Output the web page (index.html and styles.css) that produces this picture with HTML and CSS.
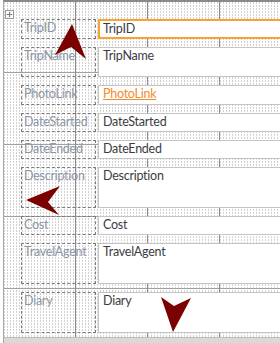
FILE: index.html
```
<!DOCTYPE html>
<html>
<head>
<meta charset="utf-8">
<link rel="stylesheet" href="styles.css">
</head>
<body>
<div class="canvas">
  <div class="selector">
    <svg width="9" height="9" viewBox="0 0 9 9"><rect x="0.5" y="0.5" width="8" height="8" fill="#fff" stroke="#9a9a9a"/><path d="M4.5 2v5M2 4.5h5" stroke="#7a7a7a" stroke-width="1"/><path d="M4.5 1.5l-1 1h2zM4.5 7.5l-1-1h2zM1.5 4.5l1-1v2zM7.5 4.5l-1-1v2z" fill="#7a7a7a"/></svg>
  </div>
  <div class="rows">
    <div class="row h1"><div class="label">TripID</div><div class="field selected">TripID</div></div>
    <div class="row h2"><div class="label">TripName</div><div class="field">TripName</div></div>
    <div class="row h3"><div class="label">PhotoLink</div><div class="field"><span class="link">PhotoLink</span></div></div>
    <div class="row h4"><div class="label">DateStarted</div><div class="field">DateStarted</div></div>
    <div class="row h5"><div class="label">DateEnded</div><div class="field">DateEnded</div></div>
    <div class="row h6"><div class="label">Description</div><div class="field">Description</div></div>
    <div class="row h7"><div class="label">Cost</div><div class="field">Cost</div></div>
    <div class="row h8"><div class="label">TravelAgent</div><div class="field">TravelAgent</div></div>
    <div class="row h9"><div class="label">Diary</div><div class="field">Diary</div></div>
  </div>
  <div class="footer-bar"></div>
  <svg class="arrows" width="280" height="343" viewBox="0 0 280 343">
    <polygon points="72,24 86,59 71,47 55,55" fill="#7b0000"/>
    <polygon points="26,200 60,186 48,202 59,215" fill="#7b0000"/>
    <polygon points="173,332 161,297 174,306 191,298" fill="#7b0000"/>
  </svg>
</div>
</body>
</html>
```
FILE: styles.css
```
html, body {
  margin: 0;
  padding: 0;
  background: #fff;
}
.canvas {
  position: relative;
  width: 277px;
  height: 341px;
  margin-left: 3px;
  border-left: 1px solid #a8a8a8;
  border-top: 2px solid #8a8a8a;
  overflow: hidden;
  font-family: Lato, "Open Sans", sans-serif;
  font-size: 12.5px;
  letter-spacing: -0.25px;
  background-color: #fff;
  background-image:
    linear-gradient(90deg, transparent 71px, #8c8c8c 71px, #8c8c8c 72px, transparent 72px),
    linear-gradient(180deg, transparent 70px, #a0a0a0 70px, #a0a0a0 71px, transparent 71px),
    linear-gradient(90deg, transparent 0, transparent 1px, #fff 1px, #fff 3px),
    linear-gradient(180deg, #d2d2d2 0, #d2d2d2 2px, #fff 2px, #fff 3px);
  background-size: 72px 100%, 100% 72px, 3px 3px, 3px 3px;
  background-repeat: repeat-x, repeat-y, repeat, repeat;
  background-position: 0 0, 0 0, 0 0, 0 0;
}
.selector {
  position: absolute;
  left: 1px;
  top: 8px;
  line-height: 0;
}
.rows {
  display: flex;
  flex-direction: column;
  gap: 8px;
  padding: 17px 0 0 17px;
}
.row {
  display: flex;
  gap: 2px;
}
.h1 { height: 20px; }
.h2 { height: 30px; }
.h3 { height: 20px; }
.h4 { height: 19px; }
.h5 { height: 19px; }
.h6 { height: 41px; }
.h7 { height: 19px; }
.h8 { height: 41px; }
.h9 { height: 41px; }
.label {
  box-sizing: border-box;
  width: 75px;
  flex: none;
  border: 1px dashed #7c7c7c;
  color: #8b96a5;
  padding: 0 0 0 2px;
  white-space: nowrap;
  line-height: 16px;
}
.field {
  box-sizing: border-box;
  width: 200px;
  flex: none;
  background: #fff;
  border: 1px solid #c4c4c4;
  color: #3a3d44;
  padding: 0 0 0 4px;
  white-space: nowrap;
  line-height: 16px;
}
.field.selected {
  border: 2px solid #f7a233;
  padding: 0 0 0 3px;
}
.link {
  color: #f28a2e;
  text-decoration: underline;
}
.footer-bar {
  position: absolute;
  left: 0;
  right: 0;
  bottom: 0;
  height: 5px;
  background: #d9d9d9;
  border-top: 1px solid #bdbdbd;
}
.arrows {
  position: absolute;
  left: -4px;
  top: -2px;
  pointer-events: none;
}
```
